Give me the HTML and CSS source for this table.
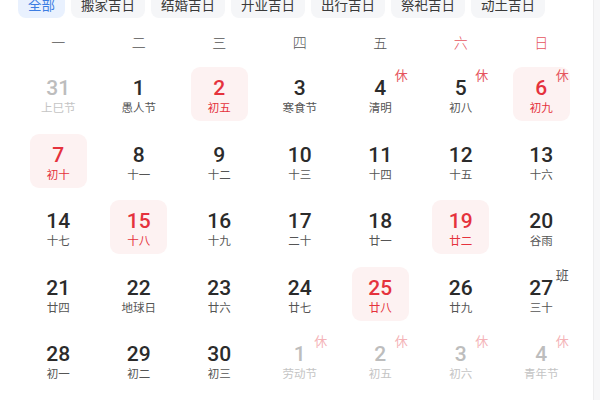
FILE: index.html
```html
<!DOCTYPE html>
<html lang="zh">
<head>
<meta charset="utf-8">
<link rel="stylesheet" href="styles.css">
</head>
<body>
<div class="page">
  <div class="main">
    <div class="tabs">
      <span class="tab active">全部</span>
      <span class="tab">搬家吉日</span>
      <span class="tab">结婚吉日</span>
      <span class="tab">开业吉日</span>
      <span class="tab">出行吉日</span>
      <span class="tab">祭祀吉日</span>
      <span class="tab">动土吉日</span>
    </div>
    <div class="weekdays">
      <span>一</span><span>二</span><span>三</span><span>四</span><span>五</span><span class="we">六</span><span class="we">日</span>
    </div>
    <div class="grid">
      <div class="cell other"><span class="num">31</span><span class="lunar">上巳节</span></div>
      <div class="cell"><span class="num">1</span><span class="lunar">愚人节</span></div>
      <div class="cell hl"><span class="num">2</span><span class="lunar">初五</span></div>
      <div class="cell"><span class="num">3</span><span class="lunar">寒食节</span></div>
      <div class="cell"><span class="num">4</span><span class="lunar">清明</span><span class="tag rest">休</span></div>
      <div class="cell"><span class="num">5</span><span class="lunar">初八</span><span class="tag rest">休</span></div>
      <div class="cell hl"><span class="num">6</span><span class="lunar">初九</span><span class="tag rest">休</span></div>

      <div class="cell hl"><span class="num">7</span><span class="lunar">初十</span></div>
      <div class="cell"><span class="num">8</span><span class="lunar">十一</span></div>
      <div class="cell"><span class="num">9</span><span class="lunar">十二</span></div>
      <div class="cell"><span class="num">10</span><span class="lunar">十三</span></div>
      <div class="cell"><span class="num">11</span><span class="lunar">十四</span></div>
      <div class="cell"><span class="num">12</span><span class="lunar">十五</span></div>
      <div class="cell"><span class="num">13</span><span class="lunar">十六</span></div>

      <div class="cell"><span class="num">14</span><span class="lunar">十七</span></div>
      <div class="cell hl"><span class="num">15</span><span class="lunar">十八</span></div>
      <div class="cell"><span class="num">16</span><span class="lunar">十九</span></div>
      <div class="cell"><span class="num">17</span><span class="lunar">二十</span></div>
      <div class="cell"><span class="num">18</span><span class="lunar">廿一</span></div>
      <div class="cell hl"><span class="num">19</span><span class="lunar">廿二</span></div>
      <div class="cell"><span class="num">20</span><span class="lunar">谷雨</span></div>

      <div class="cell"><span class="num">21</span><span class="lunar">廿四</span></div>
      <div class="cell"><span class="num">22</span><span class="lunar">地球日</span></div>
      <div class="cell"><span class="num">23</span><span class="lunar">廿六</span></div>
      <div class="cell"><span class="num">24</span><span class="lunar">廿七</span></div>
      <div class="cell hl"><span class="num">25</span><span class="lunar">廿八</span></div>
      <div class="cell"><span class="num">26</span><span class="lunar">廿九</span></div>
      <div class="cell"><span class="num">27</span><span class="lunar">三十</span><span class="tag work">班</span></div>

      <div class="cell"><span class="num">28</span><span class="lunar">初一</span></div>
      <div class="cell"><span class="num">29</span><span class="lunar">初二</span></div>
      <div class="cell"><span class="num">30</span><span class="lunar">初三</span></div>
      <div class="cell other"><span class="num">1</span><span class="lunar">劳动节</span><span class="tag rest">休</span></div>
      <div class="cell other"><span class="num">2</span><span class="lunar">初五</span><span class="tag rest">休</span></div>
      <div class="cell other"><span class="num">3</span><span class="lunar">初六</span><span class="tag rest">休</span></div>
      <div class="cell other"><span class="num">4</span><span class="lunar">青年节</span><span class="tag rest">休</span></div>
    </div>
  </div>
  <div class="strip"></div>
</div>
</body>
</html>
```

FILE: styles.css
```css
html, body {
  margin: 0;
  padding: 0;
  background: #fff;
}
body {
  font-family: "Noto Sans CJK SC", "Noto Sans", sans-serif;
  color: #333;
  overflow: hidden;
}
.page {
  display: flex;
  width: 600px;
  height: 400px;
  overflow: hidden;
}
.main {
  width: 593px;
  flex: none;
  background: #fff;
}
.strip {
  flex: 1;
  background: #f7f7f8;
  border-left: 1px solid #eeeeef;
}
.tabs {
  display: flex;
  gap: 6px;
  margin-top: -8px;
  padding-left: 18px;
  height: 26px;
}
.tab {
  display: flex;
  align-items: center;
  padding: 0 10px;
  height: 26px;
  border-radius: 8px;
  background: #f5f6f8;
  color: #3a3a3a;
  font-size: 13.5px;
  line-height: 1;
}
.tab.active {
  background: #e9f1fe;
  color: #3d7de2;
}
.weekdays {
  display: grid;
  grid-template-columns: repeat(7, 80.5px);
  margin-top: 12px;
  padding-left: 18px;
  height: 24px;
  align-items: center;
  font-size: 14px;
  font-weight: 300;
  color: #555;
}
.weekdays span {
  text-align: center;
}
.weekdays .we {
  color: #e5545d;
}
.grid {
  display: grid;
  grid-template-columns: repeat(7, 80.5px);
  grid-auto-rows: 54px;
  row-gap: 12.5px;
  margin-top: 13px;
  padding-left: 18px;
}
.cell {
  position: relative;
  width: 57px;
  height: 54px;
  justify-self: center;
  border-radius: 9px;
  display: flex;
  flex-direction: column;
  align-items: center;
  padding-top: 10px;
  box-sizing: border-box;
}
.num {
  font-family: Roboto, "Noto Sans", sans-serif;
  font-weight: 500;
  font-size: 21px;
  line-height: 22px;
  color: #2b2b2b;
}
.lunar {
  font-size: 11.5px;
  line-height: 14px;
  color: #555;
  margin-top: 1px;
}
.cell.hl {
  background: #fdf2f2;
}
.cell.hl .num,
.cell.hl .lunar {
  color: #e5323d;
}
.cell.other .num {
  color: #bdbdbd;
}
.cell.other .lunar {
  color: #c4c4c4;
}
.tag {
  position: absolute;
  top: 1px;
  right: 1px;
  font-size: 13px;
  line-height: 14px;
}
.tag.rest {
  color: #e5545d;
}
.tag.work {
  color: #555;
}
.cell.other .tag.rest {
  color: #f4b3b7;
}
```
